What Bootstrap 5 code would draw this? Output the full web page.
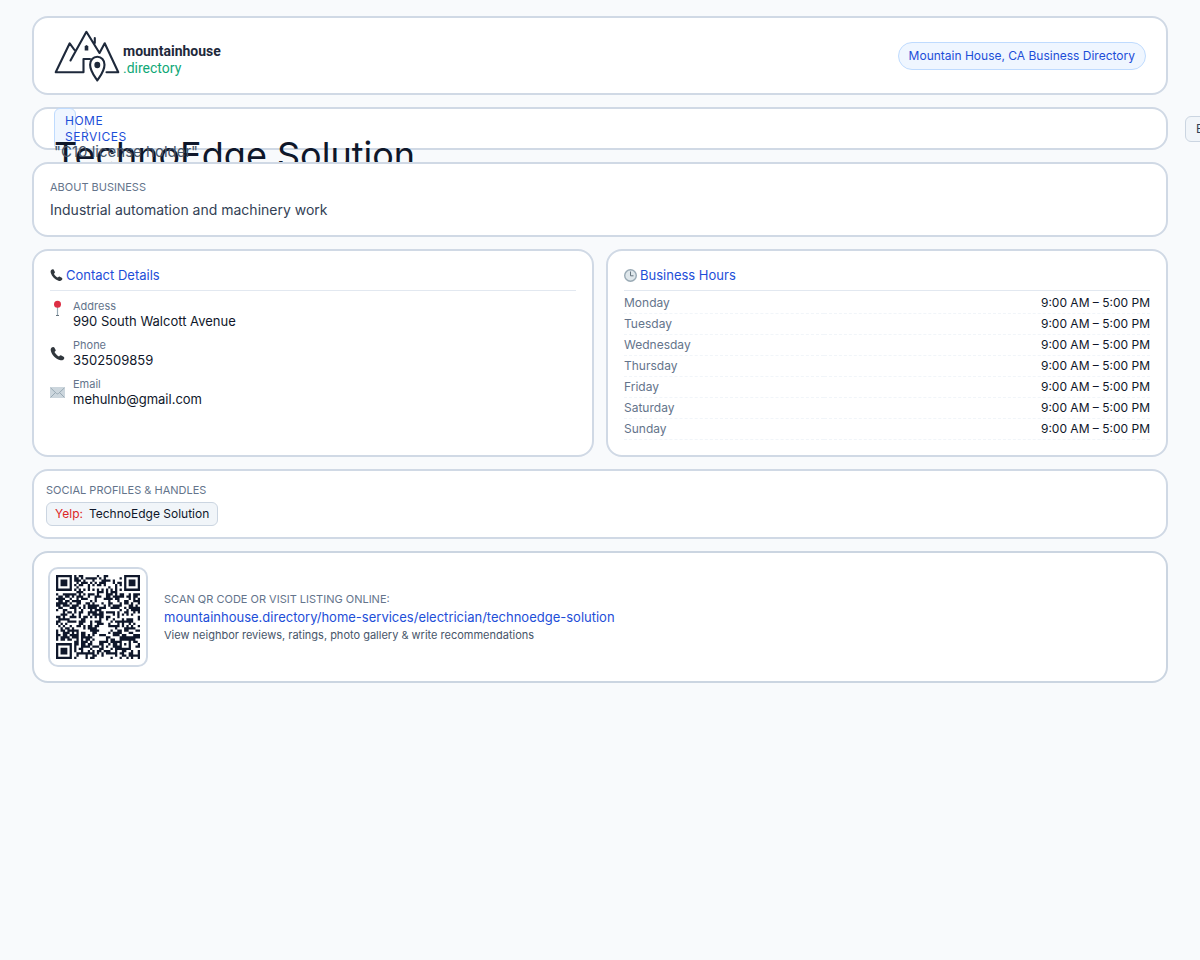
<!DOCTYPE html>
<html lang="en">
<head>
<meta charset="utf-8">
<meta name="viewport" content="width=device-width, initial-scale=1">
<title>TechnoEdge Solution</title>
<link href="https://cdn.jsdelivr.net/npm/bootstrap@5.3.0/dist/css/bootstrap.min.css" rel="stylesheet">
<style>
body{background:#f8fafc;color:#0f172a;font-family:Inter,"Liberation Sans",sans-serif;font-size:13px;line-height:16px;overflow-x:hidden}
a{text-decoration:none;color:#1d4ed8}
.page{padding:16px 32px;gap:12px;overflow-x:clip}
.panel{position:relative;background:#fff;border:2px solid #d0d9e5;border-radius:16px}
.panel-pad{padding:14px 16px 15px}
.panel-about{padding:15px 16px 14px}
.brand-words{font-family:Roboto,"Liberation Sans",sans-serif;font-size:14px;line-height:17px;color:#1e293b}
.brand-words span{color:#10a877}
.place{background:#eff6ff;border:1px solid #bfdbfe;color:#1d4ed8;font-size:12px;line-height:16px;padding:5px 10px}
.hero{height:43px}
.crumb{left:20px;top:-1px;width:22px;height:42px;padding:4px 10px;background:#eff6ff;border:1px solid #bfdbfe;border-radius:6px;font-size:12px;letter-spacing:.5px}
.sep{left:50px;top:13px;font-size:10px;color:#94a3b8}
.hero h1{left:20px;top:24px;font-size:36px;line-height:44px;font-weight:400;margin:0;white-space:nowrap}
.quote{left:20px;top:33px;font-size:15px;line-height:20px;color:#475569;white-space:nowrap}
.kind{left:calc(100% + 19px);top:7px;padding:4px 10px;background:#f1f5f9;border:1px solid #cbd5e1;border-radius:6px;font-size:12px;color:#334155;white-space:nowrap}
.cap{font-size:11px;line-height:16px;font-weight:400;color:#64748b;margin:0}
.note{color:#475569}
.about{font-size:14px;line-height:22px;color:#334155}
.head{font-size:13px;line-height:20px;font-weight:400;color:#1d4ed8;border-bottom:1px solid #e2e8f0;padding-bottom:5px;margin:0;gap:3px}
.entry{gap:8px}
.entry dt{font-size:11px;line-height:14px;font-weight:400;color:#64748b}
.entry dd{margin:0;line-height:17px}
.hours{font-size:12px;line-height:16px;border-collapse:separate;border-spacing:0;margin-top:2px}
.hours th{font-weight:400;color:#64748b}
.hours th,.hours td{padding:2px 0;border-bottom:1px dashed #f1f5f9}
.social{padding:11px 12px}
.handle{background:#f1f5f9;border:1px solid #cbd5e1;border-radius:6px;padding:3px 8px;font-size:12px;gap:6px;color:#0f172a}
.handle span{color:#dc2626}
.qr{width:100px;height:100px;padding:6px;border:2px solid #d0d9e5;border-radius:10px}
.listing{border-color:#cbd5e1;padding:14px}
.listing-text{gap:2px}
</style>
</head>
<body>
<svg class="d-none">
<symbol id="phone" viewBox="0 0 16 16"><path fill="#31373d" d="M3.2 1 C1 1.400 .3 3.300 1 5.600 C2.300 10 6 13.700 10.400 15 C12.700 15.700 14.800 15 15.200 13 C15.300 12.300 15 11.900 14.500 11.500 L12.100 10 C11.400 9.600 10.800 9.800 10.300 10.400 L9.600 11.200 C7.700 10.300 5.700 8.300 4.800 6.400 L5.500 5.700 C6.100 5.200 6.300 4.600 5.900 3.900 L4.600 1.600 C4.200 1 3.800 .9 3.200 1z"/></symbol>
</svg>
<main class="page d-flex flex-column">
<header class="panel d-flex justify-content-between align-items-center px-3">
<a href="#" class="d-flex align-items-center ms-1" aria-label="mountainhouse.directory">
<svg width="69" height="75" viewBox="54 18 69 75" fill="none" stroke="#1e293b" stroke-width="2.1" stroke-linejoin="round" stroke-linecap="round"><path d="M74.500 50 69.700 43.300 55.700 72.200H83.500V59H90M70.500 60.500 86.400 31.800 99.500 53 104.700 43.300 118.300 72.200H106.500M94.800 38V43"/><path d="M97.300 80.500C94 75.500 90.100 71 90.100 64.800C90.100 60 93.200 56.800 97.300 56.800S104.500 60 104.500 64.800C104.500 71 100.600 75.500 97.300 80.500Z"/><ellipse cx="97.300" cy="65" rx="1.900" ry="2.200" fill="#1e293b"/><path d="M84.700 50.500V46.500Q86.500 43.500 88.300 46.500V50.500Z" fill="#1e293b" stroke="none"/></svg>
<span class="brand-words d-flex flex-column mt-2"><b>mountainhouse</b><span>.directory</span></span>
</a>
<div class="place rounded-pill me-1">Mountain House, CA Business Directory</div>
</header>

<section class="panel hero">
<a href="#" class="crumb position-absolute">HOME SERVICES</a>
<span class="sep position-absolute">›</span>
<h1 class="position-absolute">TechnoEdge Solution</h1>
<div class="quote position-absolute">"C10 license holder"</div>
<a href="#" class="kind position-absolute">ELECTRICIAN</a>
</section>

<section class="panel panel-about">
<h2 class="cap">ABOUT BUSINESS</h2>
<p class="about mb-0 mt-1">Industrial automation and machinery work</p>
</section>

<div class="row row-cols-2 gx-0" style="--bs-gutter-x:12px">
<div class="col">
<section class="panel panel-pad h-100">
<h2 class="head d-flex align-items-center"><svg width="13" height="14"><use href="#phone"/></svg>Contact Details</h2>
<dl class="d-flex flex-column gap-2 mb-0 mt-2">
<div class="entry d-flex"><svg width="15" height="18" viewBox="0 0 15 18"><path d="M6.900 8h1.200v8.500h-1.200z" fill="#99aab5"/><path d="M6 16h3v1H6z" fill="#66757f"/><circle cx="7.500" cy="5.300" r="3.500" fill="#dd2e44"/></svg><div><dt>Address</dt><dd>990 South Walcott Avenue</dd></div></div>
<div class="entry d-flex align-items-center"><svg width="15" height="15"><use href="#phone"/></svg><div><dt>Phone</dt><dd>3502509859</dd></div></div>
<div class="entry d-flex align-items-center"><svg width="15" height="15" viewBox="0 0 15 15"><rect y="2" width="15" height="11" rx="1" fill="#ccd6dd"/><path d="M.5 12.500 5.500 7.500M14.500 12.500 9.500 7.500M.5 2.800 6.500 8.500Q7.500 9.300 8.500 8.500L14.500 2.800" fill="none" stroke="#99aab5"/></svg><div><dt>Email</dt><dd>mehulnb@gmail.com</dd></div></div>
</dl>
</section>
</div>
<div class="col">
<section class="panel panel-pad h-100">
<h2 class="head d-flex align-items-center"><svg width="13" height="13" viewBox="0 0 13 13"><circle cx="6.500" cy="6.500" r="5.800" fill="#dfe7eb" stroke="#99aab5" stroke-width="1.400"/><path d="M6.500 2.500V6.800H9.500" fill="none" stroke="#66757f"/></svg>Business Hours</h2>
<table class="hours w-100"><tbody>
<tr><th scope="row">Monday</th><td class="text-end">9:00 AM – 5:00 PM</td></tr>
<tr><th scope="row">Tuesday</th><td class="text-end">9:00 AM – 5:00 PM</td></tr>
<tr><th scope="row">Wednesday</th><td class="text-end">9:00 AM – 5:00 PM</td></tr>
<tr><th scope="row">Thursday</th><td class="text-end">9:00 AM – 5:00 PM</td></tr>
<tr><th scope="row">Friday</th><td class="text-end">9:00 AM – 5:00 PM</td></tr>
<tr><th scope="row">Saturday</th><td class="text-end">9:00 AM – 5:00 PM</td></tr>
<tr><th scope="row">Sunday</th><td class="text-end">9:00 AM – 5:00 PM</td></tr>
</tbody></table>
</section>
</div>
</div>

<section class="panel social d-flex flex-column align-items-start gap-1">
<h2 class="cap">SOCIAL PROFILES &amp; HANDLES</h2>
<a href="#" class="handle d-flex"><span>Yelp:</span>TechnoEdge Solution</a>
</section>

<section class="panel listing d-flex align-items-center gap-3">
<div class="qr"><svg id="qr" class="d-block w-100 h-100" viewBox="0 0 37 37" role="img" aria-label="QR code"><path fill="#0f172a"/></svg></div>
<div class="listing-text d-flex flex-column">
<p class="cap">SCAN QR CODE OR VISIT LISTING ONLINE:</p>
<a href="#">mountainhouse.directory/home-services/electrician/technoedge-solution</a>
<p class="cap note">View neighbor reviews, ratings, photo gallery &amp; write recommendations</p>
</div>
</section>
</main>
<script src="https://cdn.jsdelivr.net/npm/bootstrap@5.3.0/dist/js/bootstrap.bundle.min.js"></script>
<script>
// QR encoder for a version 5, level M symbol: 37 modules, two blocks of 43 data and 24 check bytes.
function qrMatrix(text){
  const N=37, bits=[], put=(v,n)=>{for(let i=n-1;i>=0;i--)bits.push(v>>i&1)};
  put(4,4); put(text.length,8); for(const c of text)put(c.charCodeAt(0),8); put(0,4);
  while(bits.length%8)bits.push(0);
  const data=[]; for(let i=0;i<bits.length;i+=8)data.push(parseInt(bits.slice(i,i+8).join(''),2));
  for(let p=0;data.length<86;p++)data.push(p%2?17:236);
  const mul=(a,b)=>{let z=0;for(let i=7;i>=0;i--){z=(z<<1)^((z>>>7)*285);z^=(b>>>i&1)*a}return z};
  const gen=Array(24).fill(0); gen[23]=1; let root=1;
  for(let i=0;i<24;i++){for(let j=0;j<24;j++){gen[j]=mul(gen[j],root);if(j<23)gen[j]^=gen[j+1]}root=mul(root,2)}
  const check=d=>{const r=Array(24).fill(0);for(const b of d){const f=b^r.shift();r.push(0);gen.forEach((g,i)=>r[i]^=mul(g,f))}return r};
  const A=data.slice(0,43),B=data.slice(43),EA=check(A),EB=check(B),out=[];
  A.forEach((v,i)=>out.push(v,B[i])); EA.forEach((v,i)=>out.push(v,EB[i]));
  const m=[...Array(N)].map(()=>Array(N).fill(0)), fixed=[...Array(N)].map(()=>Array(N).fill(false));
  const set=(x,y,v)=>{m[y][x]=v?1:0;fixed[y][x]=true};
  for(let i=0;i<N;i++){set(6,i,i%2===0);set(i,6,i%2===0)}
  for(const [cx,cy] of [[3,3],[33,3],[3,33]])
    for(let dy=-4;dy<=4;dy++)for(let dx=-4;dx<=4;dx++){const x=cx+dx,y=cy+dy,d=Math.max(Math.abs(dx),Math.abs(dy));if(x>=0&&x<N&&y>=0&&y<N)set(x,y,d!==2&&d!==4)}
  for(let dy=-2;dy<=2;dy++)for(let dx=-2;dx<=2;dx++)set(30+dx,30+dy,Math.max(Math.abs(dx),Math.abs(dy))!==1);
  const format=k=>{
    let r=k; for(let i=0;i<10;i++)r=(r<<1)^((r>>>9)*0x537);
    const f=(k<<10|r)^0x5412, b=i=>f>>>i&1;
    for(let i=0;i<=5;i++)set(8,i,b(i)); set(8,7,b(6));set(8,8,b(7));set(7,8,b(8));
    for(let i=9;i<15;i++)set(14-i,8,b(i)); for(let i=0;i<8;i++)set(N-1-i,8,b(i));
    for(let i=8;i<15;i++)set(8,N-15+i,b(i)); set(8,N-8,1)};
  format(0);
  let n=0;
  for(let r=N-1;r>=1;r-=2){if(r===6)r=5;for(let v=0;v<N;v++)for(let j=0;j<2;j++){const x=r-j,y=((r+1)&2)===0?N-1-v:v;if(!fixed[y][x]&&n<out.length*8){m[y][x]=out[n>>>3]>>>(7-(n&7))&1;n++}}}
  const masks=[(x,y)=>(x+y)%2,(x,y)=>y%2,(x,y)=>x%3,(x,y)=>(x+y)%3,(x,y)=>((x/3|0)+(y/2|0))%2,(x,y)=>x*y%2+x*y%3,(x,y)=>(x*y%2+x*y%3)%2,(x,y)=>((x+y)%2+x*y%3)%2];
  const flip=k=>{for(let y=0;y<N;y++)for(let x=0;x<N;x++)if(!fixed[y][x]&&masks[k](x,y)===0)m[y][x]^=1};
  const score=()=>{
    let s=0,dark=0; const lines=[...m,...m.map((_,x)=>m.map(r=>r[x]))];
    for(const l of lines){const t=l.join('');for(const g of t.match(/0{5,}|1{5,}/g)||[])s+=g.length-2;
      for(let i=0;i+11<=N;i++){const q=t.substr(i,11);if(q==='10111010000'||q==='00001011101')s+=40}}
    for(let y=0;y<N;y++)for(let x=0;x<N;x++){dark+=m[y][x];if(x<N-1&&y<N-1&&m[y][x]===m[y][x+1]&&m[y][x]===m[y+1][x]&&m[y][x]===m[y+1][x+1])s+=3}
    return s+Math.floor(Math.abs(dark*20-N*N*10)/(N*N))*10};
  let best=0,low=Infinity;
  for(let k=0;k<8;k++){flip(k);format(k);const s=score();if(s<low){low=s;best=k}flip(k)}
  flip(best);format(best);
  return m;
}
const cells=qrMatrix('https://mountainhouse.directory/home-services/electrician/technoedge-solution');
document.querySelector('#qr path').setAttribute('d',cells.map((r,y)=>r.map((v,x)=>v?`M${x} ${y}h1v1h-1z`:'').join('')).join(''));
</script>
</body>
</html>
